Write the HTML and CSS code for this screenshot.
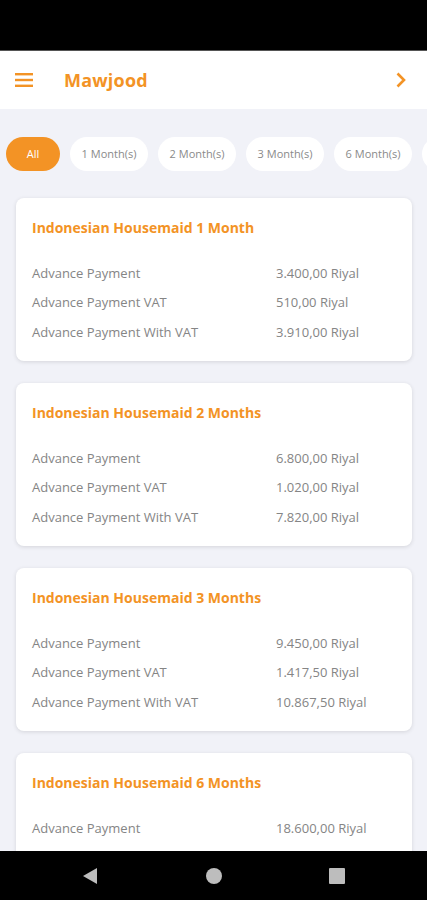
FILE: index.html
```html
<!DOCTYPE html>
<html lang="en">
<head>
    <meta charset="UTF-8">
    <meta name="viewport" content="width=device-width, initial-scale=1.0">
    <title>Mawjood</title>
    <link rel="stylesheet" href="styles.css">
</head>
<body>
<div id="statusbar"></div>
<div id="appbar">
    <svg class="menu-icon" width="18" height="14" viewBox="0 0 18 14">
        <rect x="0" y="0" width="18" height="2.4" fill="#f39325"/>
        <rect x="0" y="5.8" width="18" height="2.4" fill="#f39325"/>
        <rect x="0" y="11.6" width="18" height="2.4" fill="#f39325"/>
    </svg>
    <h1 class="title">Mawjood</h1>
    <svg class="next-icon" width="12" height="16" viewBox="0 0 12 16">
        <path d="M2.5 1.5 L9 8 L2.5 14.5" fill="none" stroke="#f39325" stroke-width="2.6"/>
    </svg>
</div>
<div id="content">
    <div id="chips">
        <div class="chip chip-active">All</div>
        <div class="chip">1 Month(s)</div>
        <div class="chip">2 Month(s)</div>
        <div class="chip">3 Month(s)</div>
        <div class="chip">6 Month(s)</div>
        <div class="chip">12 Month(s)</div>
    </div>

    <div class="card">
        <h2 class="card-title">Indonesian Housemaid 1 Month</h2>
        <div class="row"><span class="label">Advance Payment</span><span class="value">3.400,00 Riyal</span></div>
        <div class="row"><span class="label">Advance Payment VAT</span><span class="value">510,00 Riyal</span></div>
        <div class="row"><span class="label">Advance Payment With VAT</span><span class="value">3.910,00 Riyal</span></div>
    </div>

    <div class="card">
        <h2 class="card-title">Indonesian Housemaid 2 Months</h2>
        <div class="row"><span class="label">Advance Payment</span><span class="value">6.800,00 Riyal</span></div>
        <div class="row"><span class="label">Advance Payment VAT</span><span class="value">1.020,00 Riyal</span></div>
        <div class="row"><span class="label">Advance Payment With VAT</span><span class="value">7.820,00 Riyal</span></div>
    </div>

    <div class="card">
        <h2 class="card-title">Indonesian Housemaid 3 Months</h2>
        <div class="row"><span class="label">Advance Payment</span><span class="value">9.450,00 Riyal</span></div>
        <div class="row"><span class="label">Advance Payment VAT</span><span class="value">1.417,50 Riyal</span></div>
        <div class="row"><span class="label">Advance Payment With VAT</span><span class="value">10.867,50 Riyal</span></div>
    </div>

    <div class="card">
        <h2 class="card-title">Indonesian Housemaid 6 Months</h2>
        <div class="row"><span class="label">Advance Payment</span><span class="value">18.600,00 Riyal</span></div>
        <div class="row"><span class="label">Advance Payment VAT</span><span class="value">2.790,00 Riyal</span></div>
        <div class="row"><span class="label">Advance Payment With VAT</span><span class="value">21.390,00 Riyal</span></div>
    </div>
</div>
<div id="navbar">
    <svg width="18" height="18" viewBox="0 0 18 18"><path d="M16 1 L16 17 L2 9 Z" fill="#bdbdbd"/></svg>
    <svg width="18" height="18" viewBox="0 0 18 18"><circle cx="9" cy="9" r="8" fill="#bdbdbd"/></svg>
    <svg width="18" height="18" viewBox="0 0 18 18"><rect x="1" y="1" width="16" height="16" rx="1" fill="#bdbdbd"/></svg>
</div>
</body>
</html>
```

FILE: styles.css
```css
body {
    margin: 0;
    padding: 0;
    width: 427px;
    height: 900px;
    overflow: hidden;
    background-color: #f1f2f8;
    font-family: "Open Sans", "DejaVu Sans", sans-serif;
    display: flex;
    flex-direction: column;
}

#statusbar {
    height: 50px;
    flex-shrink: 0;
    background-color: black;
    border-bottom: 1px solid #555;
}

#appbar {
    height: 58px;
    flex-shrink: 0;
    background-color: white;
    display: flex;
    align-items: center;
    padding: 0 20px 0 15px;
}

.menu-icon {
    margin-right: 31px;
}

.title {
    flex: 1;
    margin: 0;
    font-size: 18px;
    font-weight: 700;
    color: #f39325;
    letter-spacing: 0.2px;
}

#content {
    flex: 1;
    overflow: hidden;
}

#chips {
    display: flex;
    gap: 10px;
    padding: 28px 0 0 6px;
    white-space: nowrap;
}

.chip {
    flex-shrink: 0;
    width: 78px;
    height: 34px;
    line-height: 34px;
    text-align: center;
    border-radius: 17px;
    background-color: white;
    color: #8a8a8a;
    font-size: 11px;
}

.chip-active {
    width: 54px;
    background-color: #f39325;
    color: white;
}

.card {
    margin: 27px 15px 0 16px;
    height: 163px;
    box-sizing: border-box;
    padding: 20px 16px 0 16px;
    background-color: white;
    border-radius: 8px;
    box-shadow: 0 1px 4px rgba(0, 0, 0, 0.12);
}

.card + .card {
    margin-top: 22px;
}

.card-title {
    margin: 0 0 20px 0;
    font-size: 14px;
    font-weight: 700;
    color: #f39325;
    line-height: 20px;
}

.row {
    display: flex;
    height: 29.5px;
    align-items: center;
    font-size: 13px;
    color: #858585;
}

.label {
    width: 244px;
}

#navbar {
    height: 49px;
    flex-shrink: 0;
    background-color: black;
    display: flex;
    align-items: center;
    justify-content: space-between;
    padding: 0 81px 0 81px;
}
```
